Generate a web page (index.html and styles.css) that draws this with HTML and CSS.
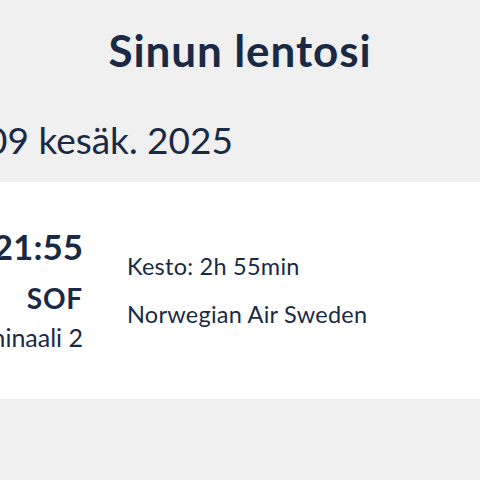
FILE: index.html
```html
<!DOCTYPE html>
<html lang="fi">
<head>
<meta charset="utf-8">
<link rel="stylesheet" href="styles.css">
</head>
<body>
<div class="page">
  <h1 class="title">Sinun lentosi</h1>
  <div class="date">09 kesäk. 2025</div>
  <section class="card">
    <div class="arrival">
      <div class="time">21:55</div>
      <div class="code">SOF</div>
      <div class="terminal">Terminaali 2</div>
    </div>
    <div class="details">
      <div class="detail">Kesto: 2h 55min</div>
      <div class="detail">Norwegian Air Sweden</div>
    </div>
  </section>
</div>
</body>
</html>
```
FILE: styles.css
```css
html, body {
  margin: 0;
  padding: 0;
  background: #f0f0f0;
}
body {
  font-family: "Lato", "Inter", sans-serif;
  color: #1a2a45;
  width: 480px;
  height: 480px;
  overflow: hidden;
}
.page {
  display: flex;
  flex-direction: column;
}
.title {
  margin: 0;
  padding-top: 23px;
  text-align: center;
  font-size: 44px;
  font-weight: 700;
  line-height: 54px;
  letter-spacing: 0.9px;
}
.date {
  margin: 41px 0 0 -14px;
  font-size: 37px;
  line-height: 44px;
  white-space: nowrap;
}
.card {
  margin-top: 20px;
  background: #fff;
  height: 218px;
  display: flex;
  align-items: flex-start;
  border-bottom: 1px solid #eaeaea;
  box-sizing: border-box;
}
.arrival {
  width: 83px;
  flex: none;
  display: flex;
  flex-direction: column;
  align-items: flex-end;
  white-space: nowrap;
  padding-top: 42px;
}
.time {
  font-size: 35px;
  font-weight: 700;
  line-height: 44px;
}
.code {
  margin-top: 13px;
  font-size: 28px;
  font-weight: 700;
  line-height: 34px;
  letter-spacing: 0.8px;
}
.terminal {
  margin-top: 7px;
  font-size: 25px;
  line-height: 30px;
}
.details {
  margin-left: 44px;
  padding-top: 70px;
  display: flex;
  flex-direction: column;
  gap: 20px;
}
.detail {
  font-size: 23.5px;
  line-height: 28px;
  letter-spacing: 0.25px;
}
```
